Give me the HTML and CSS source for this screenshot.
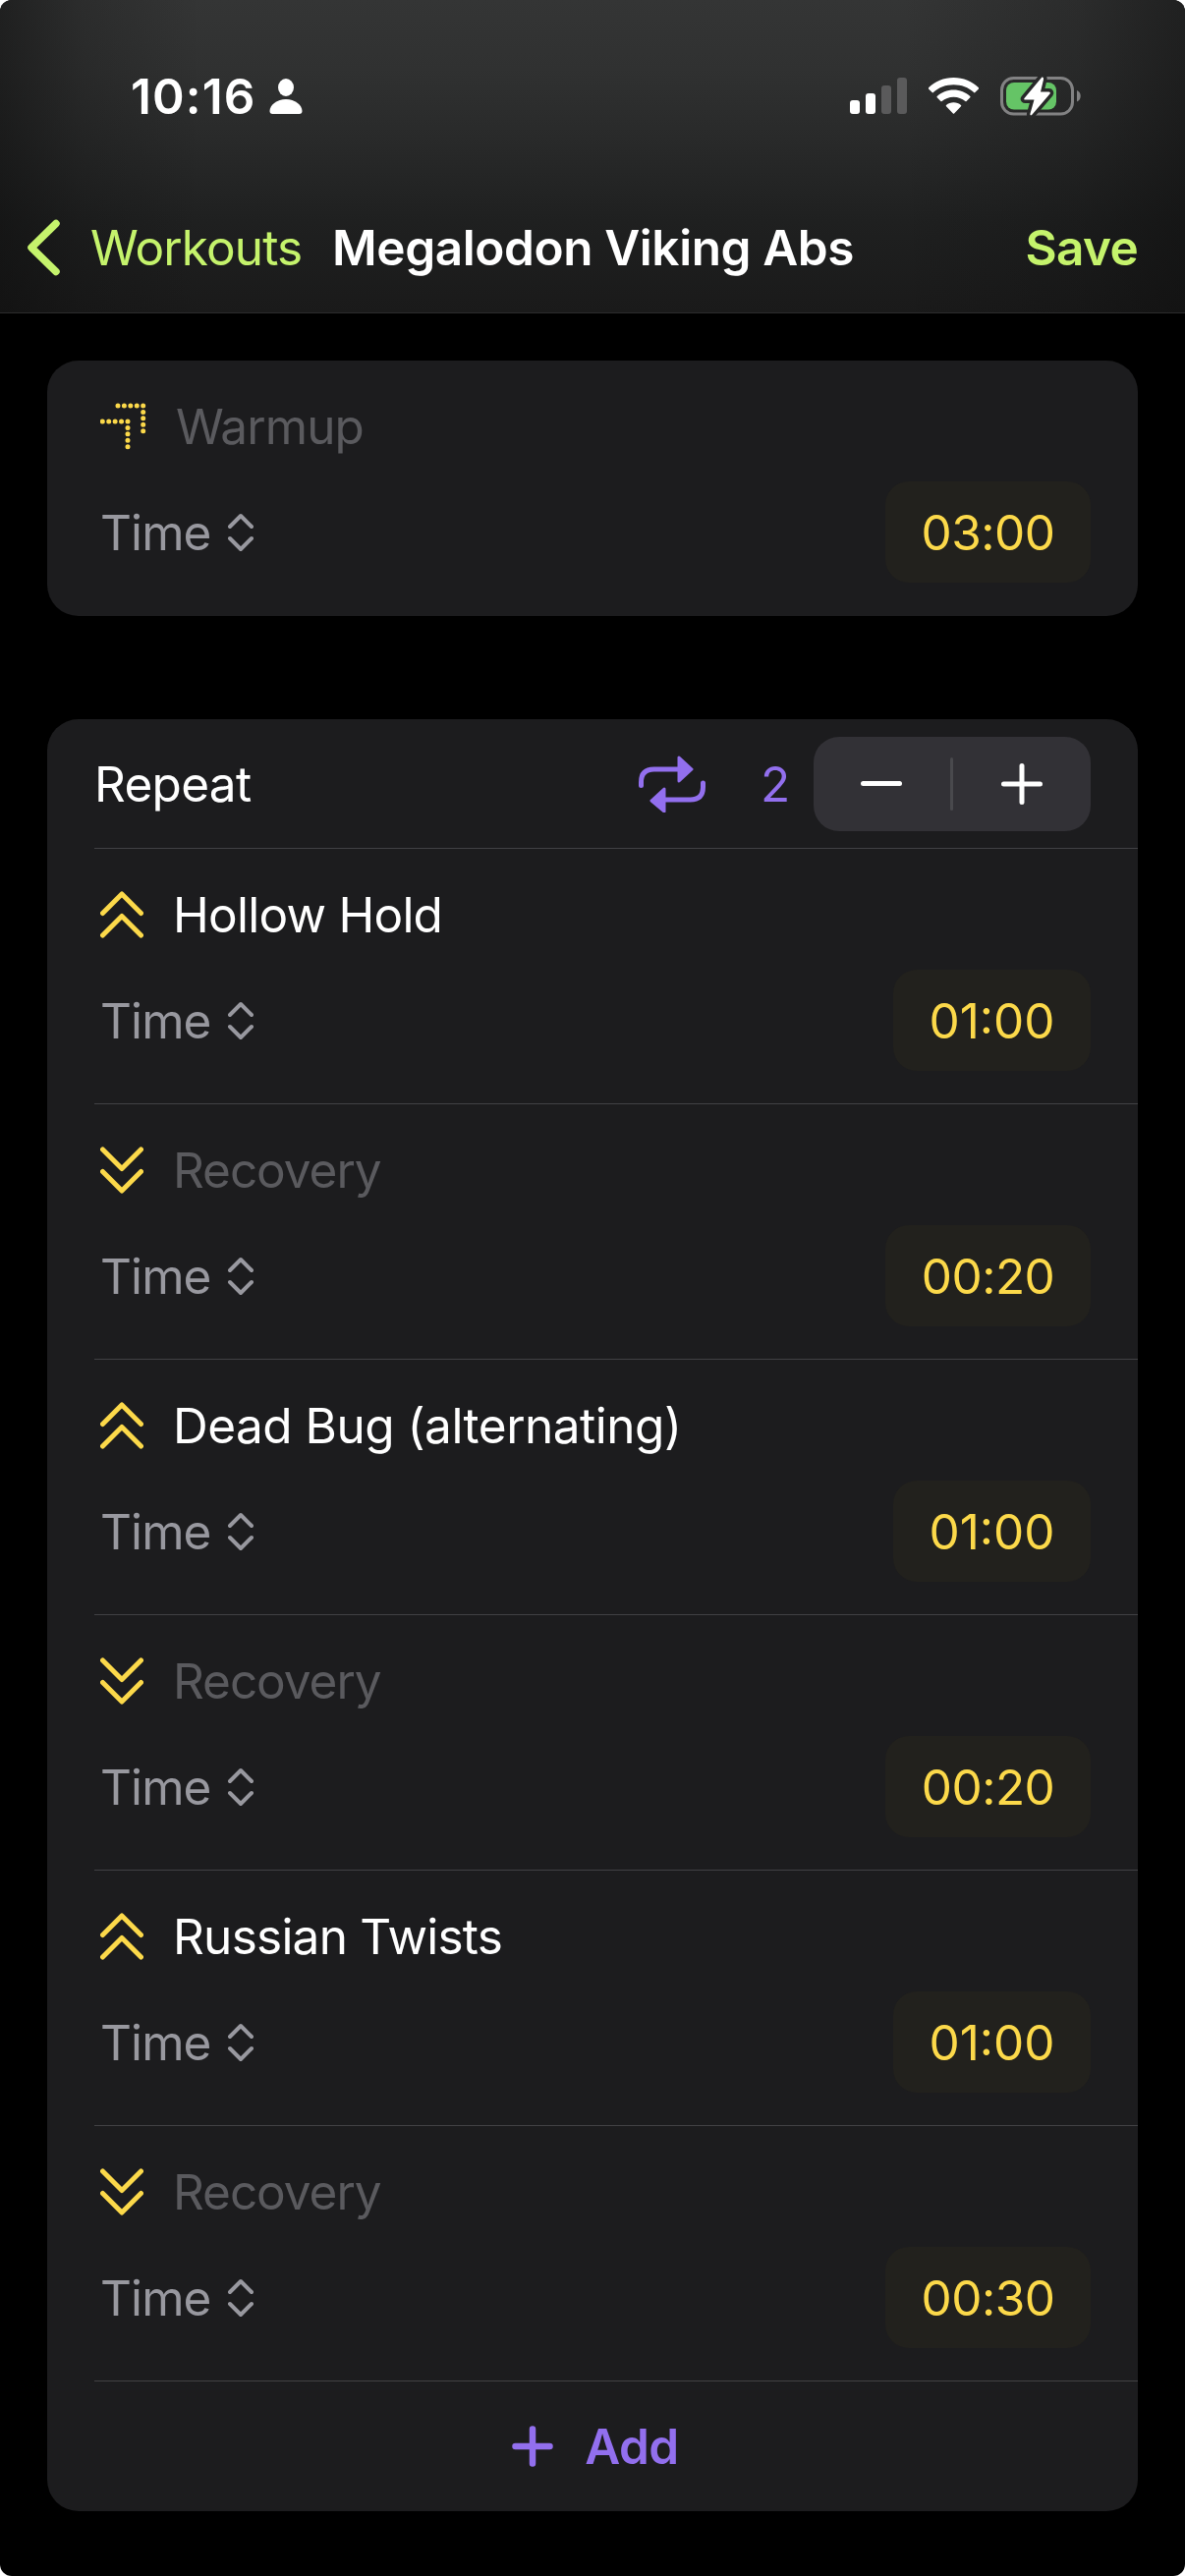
FILE: index.html
```html
<!DOCTYPE html>
<html lang="en">
<head>
<meta charset="utf-8">
<title>Megalodon Viking Abs</title>
<link rel="stylesheet" href="styles.css">
</head>
<body>
<svg class="defs" aria-hidden="true">
  <symbol id="up" viewBox="0 0 44 48"><path d="M2.5 22.5 22 3l19.500 19.500M2.500 45 22 25.500 41.500 45"/></symbol>
  <symbol id="down" viewBox="0 0 44 48"><path d="M2.500 3 22 22.500 41.500 3M2.500 25.500 22 45 41.500 25.500"/></symbol>
  <symbol id="select" viewBox="0 0 26 40"><path d="M2 14 13 3l11 11M2 26l11 11 11-11"/></symbol>
</svg>
<div class="screen">
  <header class="header">
    <div class="status">
      <span class="clock">10:16</span>
      <svg class="person" viewBox="0 0 34 36"><ellipse cx="17" cy="9" rx="8" ry="9"/><path d="M17 21c9 0 16.500 6 16.500 12 0 2-1 3-3 3h-27c-2 0-3-1-3-3C.5 27 8 21 17 21z"/></svg>
      <svg class="signal" viewBox="0 0 58 37"><rect y="23" width="10" height="14" rx="3"/><rect x="16" y="16" width="10" height="21" rx="3"/><rect class="off" x="32" y="8" width="10" height="29" rx="3"/><rect class="off" x="48" width="10" height="37" rx="3"/></svg>
      <svg class="wifi" viewBox="0 0 51 37"><path d="M25.500 0C35.500 0 44.500 3.900 51 10.300c.3.400.3.800 0 1.200l-3.600 3.600c-.4.400-.9.400-1.300 0C40.600 10 33.400 7.300 25.500 7.300S10.400 10 4.900 15.100c-.4.400-.9.400-1.300 0L0 11.500c-.3-.4-.3-.8 0-1.200C6.500 3.900 15.500 0 25.500 0z"/><path d="M25.500 12.600c6.500 0 12.400 2.500 16.800 6.500.4.400.4.800 0 1.200l-3.700 3.700c-.4.400-.8.400-1.200 0-3.200-2.700-7.400-4.300-11.900-4.300s-8.700 1.600-11.900 4.300c-.4.400-.8.400-1.200 0l-3.700-3.700c-.4-.4-.4-.8 0-1.200 4.400-4 10.300-6.500 16.800-6.500z"/><path d="M25.500 25.300c2.900 0 5.500 1 7.500 2.800.4.400.4.800 0 1.200l-6.900 7.100c-.4.400-.8.400-1.200 0L18 29.300c-.4-.4-.4-.8 0-1.200 2-1.800 4.600-2.800 7.500-2.800z"/></svg>
      <svg class="battery" viewBox="0 0 82 42"><rect class="shell" x="1.500" y="2.500" width="72" height="36.500" rx="12"/><path class="cap" d="M78 15c5 2 5 9.500 0 11.500z"/><rect class="level" x="6" y="7" width="51" height="27.500" rx="8"/><path class="bolt-edge" d="M42 2 24.500 23c-.8 1 0 1.500 1 1.500h9L30.500 38.500c-.5 2 1 2.500 2 1L50.500 18.500c.8-1 .2-2-1-2h-8.500L44 4c.4-2-.9-3-2-2z"/><path class="bolt" d="M42 2 24.500 23c-.8 1 0 1.500 1 1.500h9L30.500 38.500c-.5 2 1 2.500 2 1L50.500 18.500c.8-1 .2-2-1-2h-8.500L44 4c.4-2-.9-3-2-2z"/></svg>
    </div>
    <nav class="nav">
      <svg class="back" viewBox="0 0 34 58"><path d="M30 4.500 5 29l25 24.500"/></svg>
      <a class="back-label">Workouts</a>
      <h1 class="title">Megalodon Viking Abs</h1>
      <a class="save">Save</a>
    </nav>
  </header>
  <main class="content">
    <section class="card">
      <div class="step">
        <div class="name muted"><svg class="dots" viewBox="0 0 48 48"><path d="M18 3h25.700v26M2.300 19H28v26"/></svg><span class="warmup">Warmup</span></div>
        <div class="goal"><span class="kind">Time</span><svg class="select"><use href="#select"/></svg><span class="value">03:00</span></div>
      </div>
    </section>
    <section class="card">
      <div class="repeat">
        <span class="repeat-label">Repeat</span>
        <svg class="loop" viewBox="0 0 68 58"><path class="line" d="M2.500 30.500V27q0-13 13-13H42M65.500 28v4q0 13-13 13H26"/><path class="head" d="M41 2v24L54 14zM26 34v23L13 46z"/></svg>
        <span class="count">2</span>
        <div class="stepper">
          <svg class="sign" viewBox="0 0 42 42"><path d="M2.500 20.500h37"/></svg>
          <i class="split"></i>
          <svg class="sign" viewBox="0 0 42 42"><path d="M2.500 21h37M21 2.500v37"/></svg>
        </div>
      </div>
      <div class="step">
        <div class="name"><svg class="arrows"><use href="#up"/></svg><span class="short">Hollow Hold</span></div>
        <div class="goal"><span class="kind">Time</span><svg class="select"><use href="#select"/></svg><span class="value narrow">01:00</span></div>
      </div>
      <div class="step">
        <div class="name muted"><svg class="arrows"><use href="#down"/></svg><span class="recovery">Recovery</span></div>
        <div class="goal"><span class="kind">Time</span><svg class="select"><use href="#select"/></svg><span class="value">00:20</span></div>
      </div>
      <div class="step">
        <div class="name"><svg class="arrows"><use href="#up"/></svg><span>Dead Bug (alternating)</span></div>
        <div class="goal"><span class="kind">Time</span><svg class="select"><use href="#select"/></svg><span class="value narrow">01:00</span></div>
      </div>
      <div class="step">
        <div class="name muted"><svg class="arrows"><use href="#down"/></svg><span class="recovery">Recovery</span></div>
        <div class="goal"><span class="kind">Time</span><svg class="select"><use href="#select"/></svg><span class="value">00:20</span></div>
      </div>
      <div class="step">
        <div class="name"><svg class="arrows"><use href="#up"/></svg><span class="short">Russian Twists</span></div>
        <div class="goal"><span class="kind">Time</span><svg class="select"><use href="#select"/></svg><span class="value narrow">01:00</span></div>
      </div>
      <div class="step">
        <div class="name muted"><svg class="arrows"><use href="#down"/></svg><span class="recovery">Recovery</span></div>
        <div class="goal"><span class="kind">Time</span><svg class="select"><use href="#select"/></svg><span class="value">00:30</span></div>
      </div>
      <div class="add">
        <svg class="plus" viewBox="0 0 42 42"><path d="M3.500 21h35M21 3.500v35"/></svg>
        <span>Add</span>
      </div>
    </section>
  </main>
</div>
</body>
</html>
```
FILE: styles.css
```css
* { box-sizing: border-box; margin: 0; padding: 0; }
html { background: #fff; }
body {
  width: 1206px;
  font-family: Inter, "Liberation Sans", sans-serif;
  font-size: 49.5px;
  line-height: 60px;
  letter-spacing: -0.5px;
  color: #fff;
  white-space: nowrap;
}
svg { display: block; flex: none; fill: none; }
.defs { display: none; }
.screen { height: 2622px; background: #000; border-radius: 12px; overflow: hidden; }

.header {
  height: 319px;
  border-bottom: 1px solid #2c2c2d;
  background:
    linear-gradient(90deg, rgba(12,12,12,.5), rgba(12,12,12,.2) 7%, rgba(12,12,12,0) 17%, rgba(12,12,12,0) 76%, rgba(12,12,12,.22) 91%, rgba(12,12,12,.5)),
    linear-gradient(180deg, #343535 0, #303131 70px, #292a2a 140px, #1f2020 225px, #1a1a1a 318px);
}
.status { display: flex; height: 198px; padding: 78px 106px 0 133px; align-items: flex-start; }
.clock { font-weight: 600; line-height: 40px; width: 141px; letter-spacing: 1.1px; }
.person { width: 34px; height: 36px; margin-top: 2px; fill: #fff; }
.signal { width: 58px; height: 37px; margin: 1px 22px 0 auto; fill: #fff; }
.off { fill: #5a5a5b; }
.wifi { width: 51px; height: 37px; margin: 1px 22px 0 0; fill: #fff; }
.battery { width: 82px; height: 42px; margin-top: -1px; overflow: visible; }
.shell { stroke: #828283; stroke-width: 3; }
.cap { fill: #828283; }
.level { fill: #65c466; }
.bolt-edge { stroke: #282929; stroke-width: 7; stroke-linejoin: round; }
.bolt { fill: #fff; }

.nav { display: flex; align-items: center; height: 108px; padding: 0 48px 0 27px; color: #c5f36c; }
.back { width: 34px; height: 58px; stroke: #c5f36c; stroke-width: 7.5; stroke-linecap: round; stroke-linejoin: round; }
.back-label { margin-left: 31px; width: 246px; letter-spacing: -0.85px; }
.title { font-size: 49.5px; font-weight: 600; color: #fff; letter-spacing: -0.4px; }
.save { margin-left: auto; font-weight: 600; letter-spacing: -0.7px; }

.content { display: grid; gap: 105px; padding: 48px 48px 0; }
.card { background: #1c1c1e; border-radius: 32px; overflow: hidden; }
.step { height: 260px; padding: 37px 48px 0 54px; }
.repeat, .step { background: linear-gradient(#414144, #414144) 48px 100% / 100% 1px no-repeat; }
.step:only-child { background: none; }
.name { display: flex; align-items: center; height: 60px; margin-bottom: 26px; }
.name span { margin-left: 30px; }
.name .short { letter-spacing: -0.75px; }
.name .recovery { letter-spacing: -1.05px; }
.name .warmup { letter-spacing: -0.9px; margin-left: 29px; }
.muted { color: #5a5a5e; }
.name svg { margin-top: -1px; }
.arrows { width: 44px; height: 48px; stroke: #fcd94a; stroke-width: 5; stroke-linecap: round; stroke-linejoin: round; }
.dots { width: 48px; height: 48px; stroke: #fcd94a; stroke-width: 5; stroke-linecap: round; stroke-dasharray: 0 6.42; margin-right: -2px; }
.name .dots + .warmup { margin-left: 31px; }
.goal { display: flex; align-items: center; height: 103px; color: #98989f; }
.kind { width: 130px; letter-spacing: -0.9px; }
.select { width: 26px; height: 40px; stroke: #98989f; stroke-width: 4; stroke-linecap: round; stroke-linejoin: round; }
.value {
  margin-left: auto; width: 209px; height: 103px; line-height: 104px;
  text-align: center; color: #fcd94a; background: #22211d; border-radius: 24px;
}
.narrow { width: 201px; letter-spacing: 0; }

.repeat { display: flex; align-items: center; height: 132px; padding: 0 48px; }
.repeat-label { letter-spacing: -0.7px; }
.loop { width: 68px; height: 58px; margin-left: auto; margin-right: 56px; }
.loop .line { stroke: #926fee; stroke-width: 5; stroke-linecap: round; }
.loop .head { fill: #926fee; stroke: #926fee; stroke-width: 3; stroke-linejoin: round; }
.count { width: 54px; color: #926fee; }
.stepper { display: flex; align-items: center; justify-content: space-between; width: 282px; height: 96px; padding: 0 49px 0 48px; border-radius: 26px; background: #323136; }
.sign { width: 42px; height: 42px; stroke: #fff; stroke-width: 5; stroke-linecap: round; }
.split { width: 3px; height: 54px; border-radius: 2px; background: #49494d; }
.add { display: flex; align-items: center; justify-content: center; gap: 32px; height: 132px; padding-left: 6px; color: #926fee; font-weight: 600; }
.plus { width: 42px; height: 42px; stroke: #926fee; stroke-width: 6.5; stroke-linecap: round; }
```
